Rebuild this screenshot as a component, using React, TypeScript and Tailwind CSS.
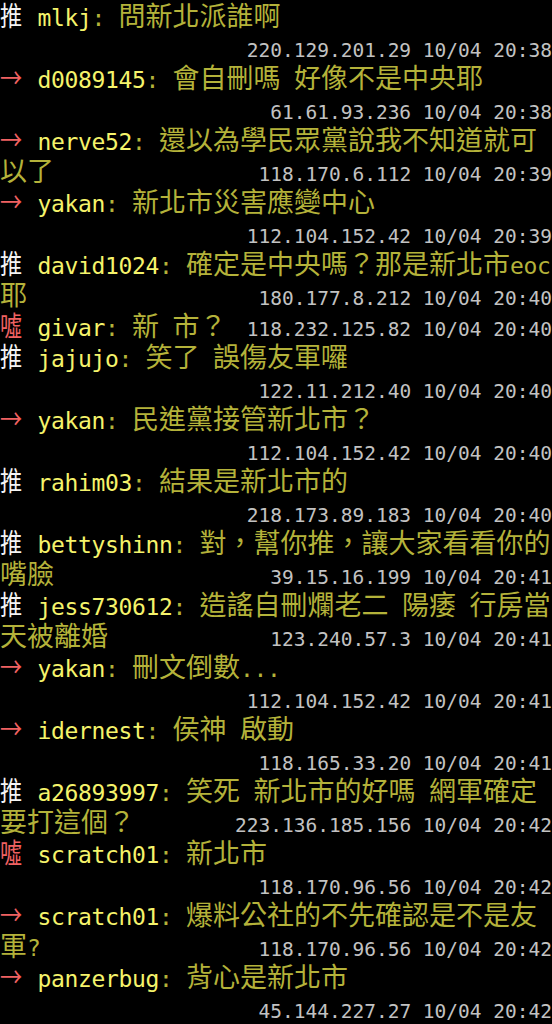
import React from 'react';

type Push = {
  tag: '推' | '→' | '噓';
  user: string;
  lines: string[];
  ip: string;
  inline?: boolean;
};

const comments: Push[] = [
  { tag: '推', user: 'mlkj', lines: ['問新北派誰啊'], ip: '220.129.201.29 10/04 20:38' },
  { tag: '→', user: 'd0089145', lines: ['會自刪嗎 好像不是中央耶'], ip: '61.61.93.236 10/04 20:38' },
  { tag: '→', user: 'nerve52', lines: ['還以為學民眾黨說我不知道就可', '以了'], ip: '118.170.6.112 10/04 20:39', inline: true },
  { tag: '→', user: 'yakan', lines: ['新北市災害應變中心'], ip: '112.104.152.42 10/04 20:39' },
  { tag: '推', user: 'david1024', lines: ['確定是中央嗎？那是新北市eoc', '耶'], ip: '180.177.8.212 10/04 20:40', inline: true },
  { tag: '噓', user: 'givar', lines: ['新 市？'], ip: '118.232.125.82 10/04 20:40', inline: true },
  { tag: '推', user: 'jajujo', lines: ['笑了 誤傷友軍囉'], ip: '122.11.212.40 10/04 20:40' },
  { tag: '→', user: 'yakan', lines: ['民進黨接管新北市？'], ip: '112.104.152.42 10/04 20:40' },
  { tag: '推', user: 'rahim03', lines: ['結果是新北市的'], ip: '218.173.89.183 10/04 20:40' },
  { tag: '推', user: 'bettyshinn', lines: ['對，幫你推，讓大家看看你的', '嘴臉'], ip: '39.15.16.199 10/04 20:41', inline: true },
  { tag: '推', user: 'jess730612', lines: ['造謠自刪爛老二 陽痿 行房當', '天被離婚'], ip: '123.240.57.3 10/04 20:41', inline: true },
  { tag: '→', user: 'yakan', lines: ['刪文倒數...'], ip: '112.104.152.42 10/04 20:41' },
  { tag: '→', user: 'idernest', lines: ['侯神 啟動'], ip: '118.165.33.20 10/04 20:41' },
  { tag: '推', user: 'a26893997', lines: ['笑死 新北市的好嗎 網軍確定', '要打這個？'], ip: '223.136.185.156 10/04 20:42', inline: true },
  { tag: '噓', user: 'scratch01', lines: ['新北市'], ip: '118.170.96.56 10/04 20:42' },
  { tag: '→', user: 'scratch01', lines: ['爆料公社的不先確認是不是友', '軍?'], ip: '118.170.96.56 10/04 20:42', inline: true },
  { tag: '→', user: 'panzerbug', lines: ['背心是新北市'], ip: '45.144.227.27 10/04 20:42' },
];

const SPLIT = /([\u2E80-\u9FFF\uF900-\uFAFF\uFE30-\uFE4F\uFF00-\uFFEF]+)/;
const IS_CJK = /[\u2E80-\u9FFF\uF900-\uFAFF\uFE30-\uFE4F\uFF00-\uFFEF]/;

// wide glyphs get the CJK face, everything else stays on the mono grid
function Segs({ text }: { text: string }) {
  return (
    <>
      {text.split(SPLIT).filter(Boolean).map((s, i) =>
        IS_CJK.test(s) ? (
          <span key={i} className="font-['Noto_Sans_CJK_TC',sans-serif] text-[27px] leading-[29px] tracking-normal">
            {s}
          </span>
        ) : (
          <span key={i}>{s}</span>
        )
      )}
    </>
  );
}

function Tag({ tag }: { tag: Push['tag'] }) {
  const color = tag === '推' ? 'text-[#f4f4f4]' : 'text-[#f06262]';
  return (
    <span className={`inline-block w-[24px] font-['Noto_Sans_CJK_TC',sans-serif] text-[27px] leading-[29px] tracking-normal ${color}`}>
      <span className="inline-block origin-left scale-x-[0.82]">{tag}</span>
    </span>
  );
}

function Ip({ text }: { text: string }) {
  return (
    <span className="ml-auto whitespace-pre font-['DejaVu_Sans_Mono',monospace] text-[19.5px] leading-[31px] tracking-normal text-[#c2c2c2]">
      {text}
    </span>
  );
}

function Comment({ c }: { c: Push }) {
  const last = c.lines.length - 1;
  return (
    <div>
      {c.lines.map((line, i) => (
        <div key={i} className="flex h-[31px] items-baseline">
          <span className="whitespace-pre leading-[31px] text-[#b4b23a]">
            {i === 0 && (
              <>
                <Tag tag={c.tag} />
                {' '}
                <span className="text-[#f5f36b]">{c.user}</span>
                {': '}
              </>
            )}
            <Segs text={line} />
          </span>
          {c.inline && i === last && <Ip text={c.ip} />}
        </div>
      ))}
      {!c.inline && (
        <div className="flex h-[31px] items-baseline pt-[4px]">
          <Ip text={c.ip} />
        </div>
      )}
    </div>
  );
}

export default function App() {
  return (
    <div className="h-[1024px] overflow-hidden bg-black font-['DejaVu_Sans_Mono',monospace] text-[23px] tracking-[-0.35px]">
      {comments.map((c, i) => (
        <Comment key={i} c={c} />
      ))}
    </div>
  );
}
